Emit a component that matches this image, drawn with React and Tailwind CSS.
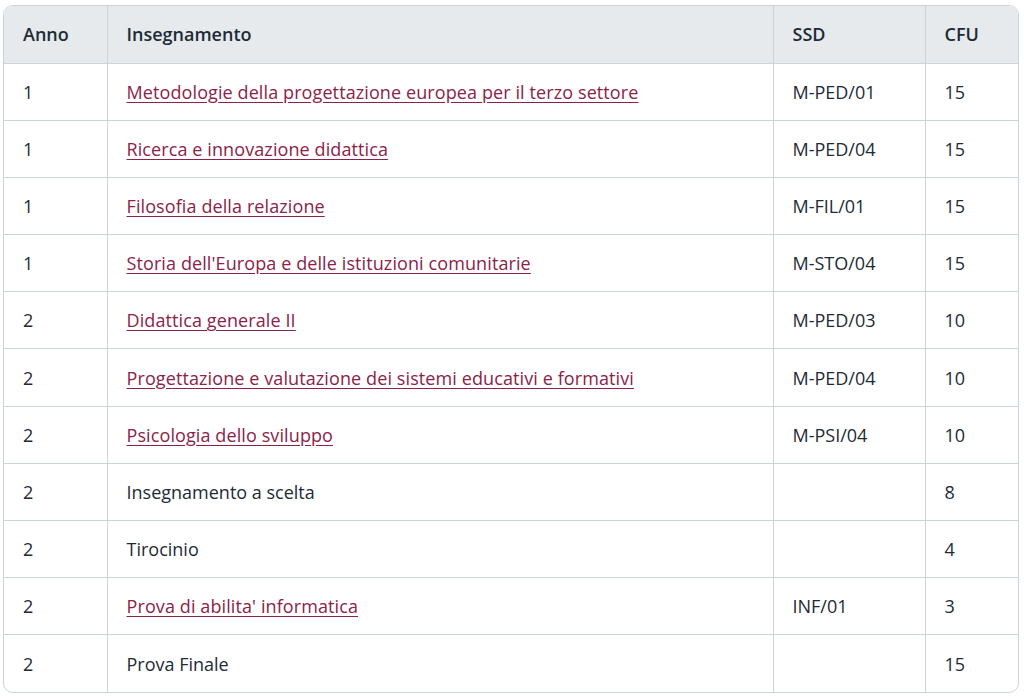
import React from 'react';

const rows = [
  { anno: '1', nome: 'Metodologie della progettazione europea per il terzo settore', ssd: 'M-PED/01', cfu: '15', link: true },
  { anno: '1', nome: 'Ricerca e innovazione didattica', ssd: 'M-PED/04', cfu: '15', link: true },
  { anno: '1', nome: 'Filosofia della relazione', ssd: 'M-FIL/01', cfu: '15', link: true },
  { anno: '1', nome: "Storia dell'Europa e delle istituzioni comunitarie", ssd: 'M-STO/04', cfu: '15', link: true },
  { anno: '2', nome: 'Didattica generale II', ssd: 'M-PED/03', cfu: '10', link: true },
  { anno: '2', nome: 'Progettazione e valutazione dei sistemi educativi e formativi', ssd: 'M-PED/04', cfu: '10', link: true },
  { anno: '2', nome: 'Psicologia dello sviluppo', ssd: 'M-PSI/04', cfu: '10', link: true },
  { anno: '2', nome: 'Insegnamento a scelta', ssd: '', cfu: '8', link: false },
  { anno: '2', nome: 'Tirocinio', ssd: '', cfu: '4', link: false },
  { anno: '2', nome: "Prova di abilita' informatica", ssd: 'INF/01', cfu: '3', link: true },
  { anno: '2', nome: 'Prova Finale', ssd: '', cfu: '15', link: false },
];

const App = () => {
  return (
    <div className="bg-white w-[1024px] h-[698px] pt-[5px] pl-[3px]" style={{ fontFamily: '"Open Sans", sans-serif' }}>
      <div className="w-[1016px] border border-[#c9d4dc] rounded-[10px] overflow-hidden">
        <table className="w-full border-collapse text-[18px] leading-6 text-[#1d2b36]">
          <colgroup>
            <col className="w-[103px]" />
            <col className="w-[666px]" />
            <col className="w-[152px]" />
            <col />
          </colgroup>
          <thead className="bg-[#e6eaed]">
            <tr className="h-[57px]">
              <th className="pl-[19px] pr-4 text-left font-semibold border-r border-b border-[#c9d4dc]">Anno</th>
              <th className="pl-[19px] pr-4 text-left font-semibold border-r border-b border-[#c9d4dc]">Insegnamento</th>
              <th className="pl-[19px] pr-4 text-left font-semibold border-r border-b border-[#c9d4dc]">SSD</th>
              <th className="pl-[19px] pr-4 text-left font-semibold border-b border-[#c9d4dc]">CFU</th>
            </tr>
          </thead>
          <tbody>
            {rows.map((r, i) => (
              <tr key={i} className="h-[57.2px]">
                <td className={`pl-[19px] pr-4 border-r border-[#c9d4dc] ${i < rows.length - 1 ? 'border-b' : ''}`}>{r.anno}</td>
                <td className={`pl-[19px] pr-4 border-r border-[#c9d4dc] ${i < rows.length - 1 ? 'border-b' : ''}`}>
                  {r.link ? (
                    <a href="#" className="text-[#8c2347] underline underline-offset-[3px] tracking-[0.1px]">{r.nome}</a>
                  ) : (
                    r.nome
                  )}
                </td>
                <td className={`pl-[19px] pr-4 border-r border-[#c9d4dc] ${i < rows.length - 1 ? 'border-b' : ''}`}>{r.ssd}</td>
                <td className={`pl-[19px] pr-4 border-[#c9d4dc] ${i < rows.length - 1 ? 'border-b' : ''}`}>{r.cfu}</td>
              </tr>
            ))}
          </tbody>
        </table>
      </div>
    </div>
  );
};

export default App;
